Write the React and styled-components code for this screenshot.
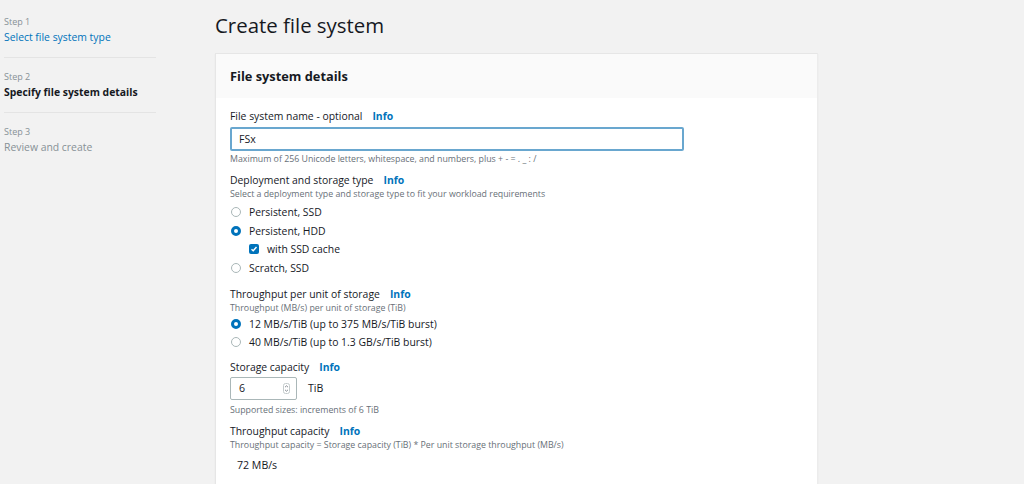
import React from 'react';
import styled, { createGlobalStyle } from 'styled-components';

const Colors = {
    Page: '#f2f2f2',
    Text: '#16191f',
    Muted: '#687078',
    Blue: '#0073bb',
    Border: '#aab7b8',
    Divider: '#e4e4e4',
};

const GlobalStyle = createGlobalStyle`
    html, body {
        margin: 0;
        padding: 0;
        background: ${Colors.Page};
        font-family: "Open Sans", "Noto Sans", Arial, sans-serif;
        color: ${Colors.Text};
    }
`;

const Page = styled.div`
    display: flex;
    width: 1024px;
    height: 484px;
    overflow: hidden;
    background: ${Colors.Page};
`;

const Sidebar = styled.nav`
    width: 152px;
    margin-left: 4px;
    padding-top: 3px;
    flex-shrink: 0;
`;

const Step = styled.div`
    padding: 12px 0 12px;
    border-bottom: ${p => (p.$last ? 'none' : `1px solid ${Colors.Divider}`)};
`;

const StepNumber = styled.div`
    font-size: 9px;
    line-height: 14px;
    color: #879196;
`;

const StepTitle = styled.div`
    font-size: 10.4px;
    line-height: 16px;
    color: ${p => (p.$state === 'done' ? Colors.Blue : p.$state === 'current' ? Colors.Text : '#879196')};
    font-weight: ${p => (p.$state === 'current' ? 700 : 400)};
`;

const Main = styled.main`
    margin-left: 59px;
    width: 603px;
`;

const Title = styled.h1`
    margin: 0;
    height: 53px;
    font-size: 20.4px;
    font-weight: 400;
    line-height: 50px;
    color: ${Colors.Text};
`;

const Card = styled.section`
    background: #fff;
    border: 1px solid #e6e6e6;
    border-right-color: #ececec;
    box-shadow: 0 1px 1px rgba(0, 28, 36, 0.08);
`;

const CardHeader = styled.header`
    background: #fafafa;
    height: 44px;
    padding: 0 14px;
    display: flex;
    align-items: center;
    font-size: 12.8px;
    font-weight: 700;
`;

const CardBody = styled.div`
    padding: 10px 14px 20px;
    display: flex;
    flex-direction: column;
    gap: 7px;
`;

const Field = styled.div`
    display: flex;
    flex-direction: column;
`;

const Label = styled.div`
    font-size: 10.4px;
    line-height: 16px;
    display: flex;
    gap: 10px;
`;

const Info = styled.span`
    color: ${Colors.Blue};
    font-weight: 700;
`;

const Hint = styled.div`
    font-size: 8.8px;
    line-height: 12px;
    color: ${Colors.Muted};
`;

const TextInput = styled.div`
    margin: 3px 0 2px;
    width: 454px;
    height: 24px;
    box-sizing: border-box;
    border: 2px solid #69a7cf;
    border-radius: 2px;
    padding: 0 7px;
    display: flex;
    align-items: center;
    font-size: 10.6px;
`;

const Options = styled.div`
    display: flex;
    flex-direction: column;
    padding-top: ${p => (p.$loose ? '3px' : '0')};
    margin-bottom: ${p => (p.$loose ? '2px' : '0')};
`;

const Option = styled.div`
    display: flex;
    align-items: center;
    height: 18.6px;
    padding-left: ${p => (p.$nested ? '19px' : '0')};
    gap: 8px;
    font-size: 10.4px;
`;

const Radio = styled.span`
    width: 10px;
    height: 10px;
    box-sizing: border-box;
    border-radius: 50%;
    margin-left: 1px;
    border: ${p => (p.$checked ? `3px solid ${Colors.Blue}` : `1px solid ${Colors.Border}`)};
    background: #fff;
`;

const Checkbox = styled.span`
    width: 10px;
    height: 10px;
    border-radius: 2px;
    background: ${Colors.Blue};
    display: flex;
    align-items: center;
    justify-content: center;
`;

const NumberRow = styled.div`
    display: flex;
    align-items: center;
    gap: 11px;
    margin: 2px 0 4px;
    font-size: 10.6px;
`;

const NumberInput = styled.div`
    width: 67px;
    height: 23px;
    box-sizing: border-box;
    border: 1px solid ${Colors.Border};
    border-radius: 2px;
    display: flex;
    align-items: center;
    justify-content: space-between;
    padding: 0 6px 0 8px;
`;

const Value = styled.div`
    font-size: 10.6px;
    padding: 7px 0 0 7px;
`;

function Spinner() {
    return (
        <svg width="7" height="11" viewBox="0 0 7 11">
            <rect x="0.5" y="0.5" width="6" height="10" rx="2" fill="none" stroke="#c4cbcc" />
            <path d="M2 4.2 L3.5 2.8 L5 4.2 M2 6.8 L3.5 8.2 L5 6.8" fill="none" stroke="#687078" strokeWidth="0.8" />
        </svg>
    );
}

function Check() {
    return (
        <svg width="8" height="8" viewBox="0 0 8 8">
            <path d="M1.5 4.2 L3.2 5.8 L6.5 2" fill="none" stroke="#fff" strokeWidth="1.4" />
        </svg>
    );
}

const steps = [
    { n: 'Step 1', title: 'Select file system type', state: 'done' },
    { n: 'Step 2', title: 'Specify file system details', state: 'current' },
    { n: 'Step 3', title: 'Review and create', state: 'todo' },
];

export default function App() {
    return (
        <>
            <GlobalStyle />
            <Page>
                <Sidebar>
                    {steps.map((s, i) => (
                        <Step key={s.n} $last={i === steps.length - 1}>
                            <StepNumber>{s.n}</StepNumber>
                            <StepTitle $state={s.state}>{s.title}</StepTitle>
                        </Step>
                    ))}
                </Sidebar>
                <Main>
                    <Title>Create file system</Title>
                    <Card>
                        <CardHeader>File system details</CardHeader>
                        <CardBody>
                            <Field>
                                <Label>File system name - optional <Info>Info</Info></Label>
                                <TextInput>FSx</TextInput>
                                <Hint>Maximum of 256 Unicode letters, whitespace, and numbers, plus + - = . _ : /</Hint>
                            </Field>
                            <Field>
                                <Label>Deployment and storage type <Info>Info</Info></Label>
                                <Hint>Select a deployment type and storage type to fit your workload requirements</Hint>
                                <Options $loose>
                                    <Option><Radio />Persistent, SSD</Option>
                                    <Option><Radio $checked />Persistent, HDD</Option>
                                    <Option $nested><Checkbox><Check /></Checkbox>with SSD cache</Option>
                                    <Option><Radio />Scratch, SSD</Option>
                                </Options>
                            </Field>
                            <Field>
                                <Label>Throughput per unit of storage <Info>Info</Info></Label>
                                <Hint>Throughput (MB/s) per unit of storage (TiB)</Hint>
                                <Options>
                                    <Option><Radio $checked />12 MB/s/TiB (up to 375 MB/s/TiB burst)</Option>
                                    <Option><Radio />40 MB/s/TiB (up to 1.3 GB/s/TiB burst)</Option>
                                </Options>
                            </Field>
                            <Field>
                                <Label>Storage capacity <Info>Info</Info></Label>
                                <NumberRow>
                                    <NumberInput>6<Spinner /></NumberInput>
                                    TiB
                                </NumberRow>
                                <Hint>Supported sizes: increments of 6 TiB</Hint>
                            </Field>
                            <Field>
                                <Label>Throughput capacity <Info>Info</Info></Label>
                                <Hint>Throughput capacity = Storage capacity (TiB) * Per unit storage throughput (MB/s)</Hint>
                                <Value>72 MB/s</Value>
                            </Field>
                        </CardBody>
                    </Card>
                </Main>
            </Page>
        </>
    );
}
